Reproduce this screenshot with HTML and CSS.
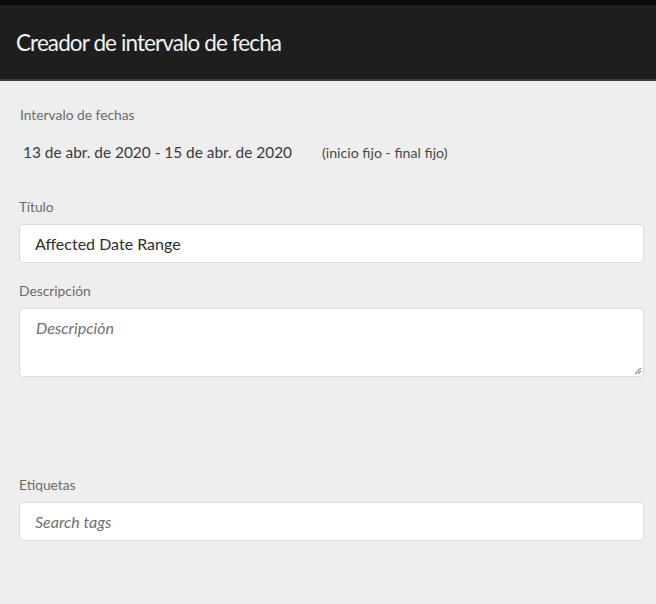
FILE: index.html
```html
<!DOCTYPE html>
<html lang="es">
<head>
<meta charset="utf-8">
<title>Creador de intervalo de fecha</title>
<link rel="stylesheet" href="styles.css">
</head>
<body>
<div class="topstrip"></div>
<header class="header">
  <h1 class="title">Creador de intervalo de fecha</h1>
</header>
<main class="content">
  <section class="range">
    <div class="label label-range">Intervalo de fechas</div>
    <div class="range-row">
      <span class="range-value">13 de abr. de 2020 - 15 de abr. de 2020</span>
      <span class="range-kind">(inicio fijo - final fijo)</span>
    </div>
  </section>
  <section class="field field-title">
    <label class="label">Título</label>
    <div class="input">Affected Date Range</div>
  </section>
  <section class="field field-desc">
    <label class="label">Descripción</label>
    <div class="textarea">
      <span class="placeholder">Descripción</span>
      <svg class="grip" width="9" height="9" viewBox="0 0 9 9"><path d="M8 2 L2 8 M8 5 L5 8" stroke="#8a8a8a" stroke-width="1.1" fill="none"/></svg>
    </div>
  </section>
  <section class="field field-tags">
    <label class="label">Etiquetas</label>
    <div class="input"><span class="placeholder">Search tags</span></div>
  </section>
</main>
</body>
</html>
```
FILE: styles.css
```css
html, body {
  margin: 0;
  padding: 0;
}
body {
  background: #eeeeee;
  font-family: Lato, "Noto Sans", sans-serif;
  width: 656px;
  height: 604px;
  overflow: hidden;
}
.topstrip {
  height: 5px;
  background: #0a0a0a;
}
.header {
  height: 74px;
  background: #1e1e1e;
  border-bottom: 2px solid #3e3e3e;
  display: flex;
  align-items: center;
  padding-left: 16px;
}
.title {
  margin: 0;
  font-weight: 400;
  font-size: 22.5px;
  color: #f2f2f2;
  letter-spacing: -0.9px;
}
.content {
  padding: 0 12px 0 19px;
}
.label {
  display: block;
  font-size: 13.8px;
  line-height: 16px;
  color: #6b6b6b;
}
.label-range {
  margin-top: 26px;
  padding-left: 1px;
}
.range-row {
  margin-top: 20px;
  padding-left: 4px;
  display: flex;
  align-items: baseline;
}
.range-value {
  font-size: 15.4px;
  color: #3a3a3a;
  width: 299px;
}
.range-kind {
  font-size: 14.2px;
  color: #4a4a4a;
}
.field-title {
  margin-top: 38px;
}
.field .label {
  margin-bottom: 9px;
}
.input {
  box-sizing: border-box;
  height: 39px;
  background: #ffffff;
  border: 1px solid #dcdcdc;
  border-radius: 4px;
  padding: 0 15px;
  display: flex;
  align-items: center;
  font-size: 16px;
  color: #2e2e2e;
}
.field-desc {
  margin-top: 20px;
}
.textarea {
  position: relative;
  box-sizing: border-box;
  height: 69px;
  background: #ffffff;
  border: 1px solid #dcdcdc;
  border-radius: 4px;
  padding: 9px 16px;
  font-size: 16px;
}
.placeholder {
  font-style: italic;
  color: #707070;
}
.grip {
  position: absolute;
  right: 1px;
  bottom: 1px;
}
.field-tags {
  margin-top: 100px;
}
```
